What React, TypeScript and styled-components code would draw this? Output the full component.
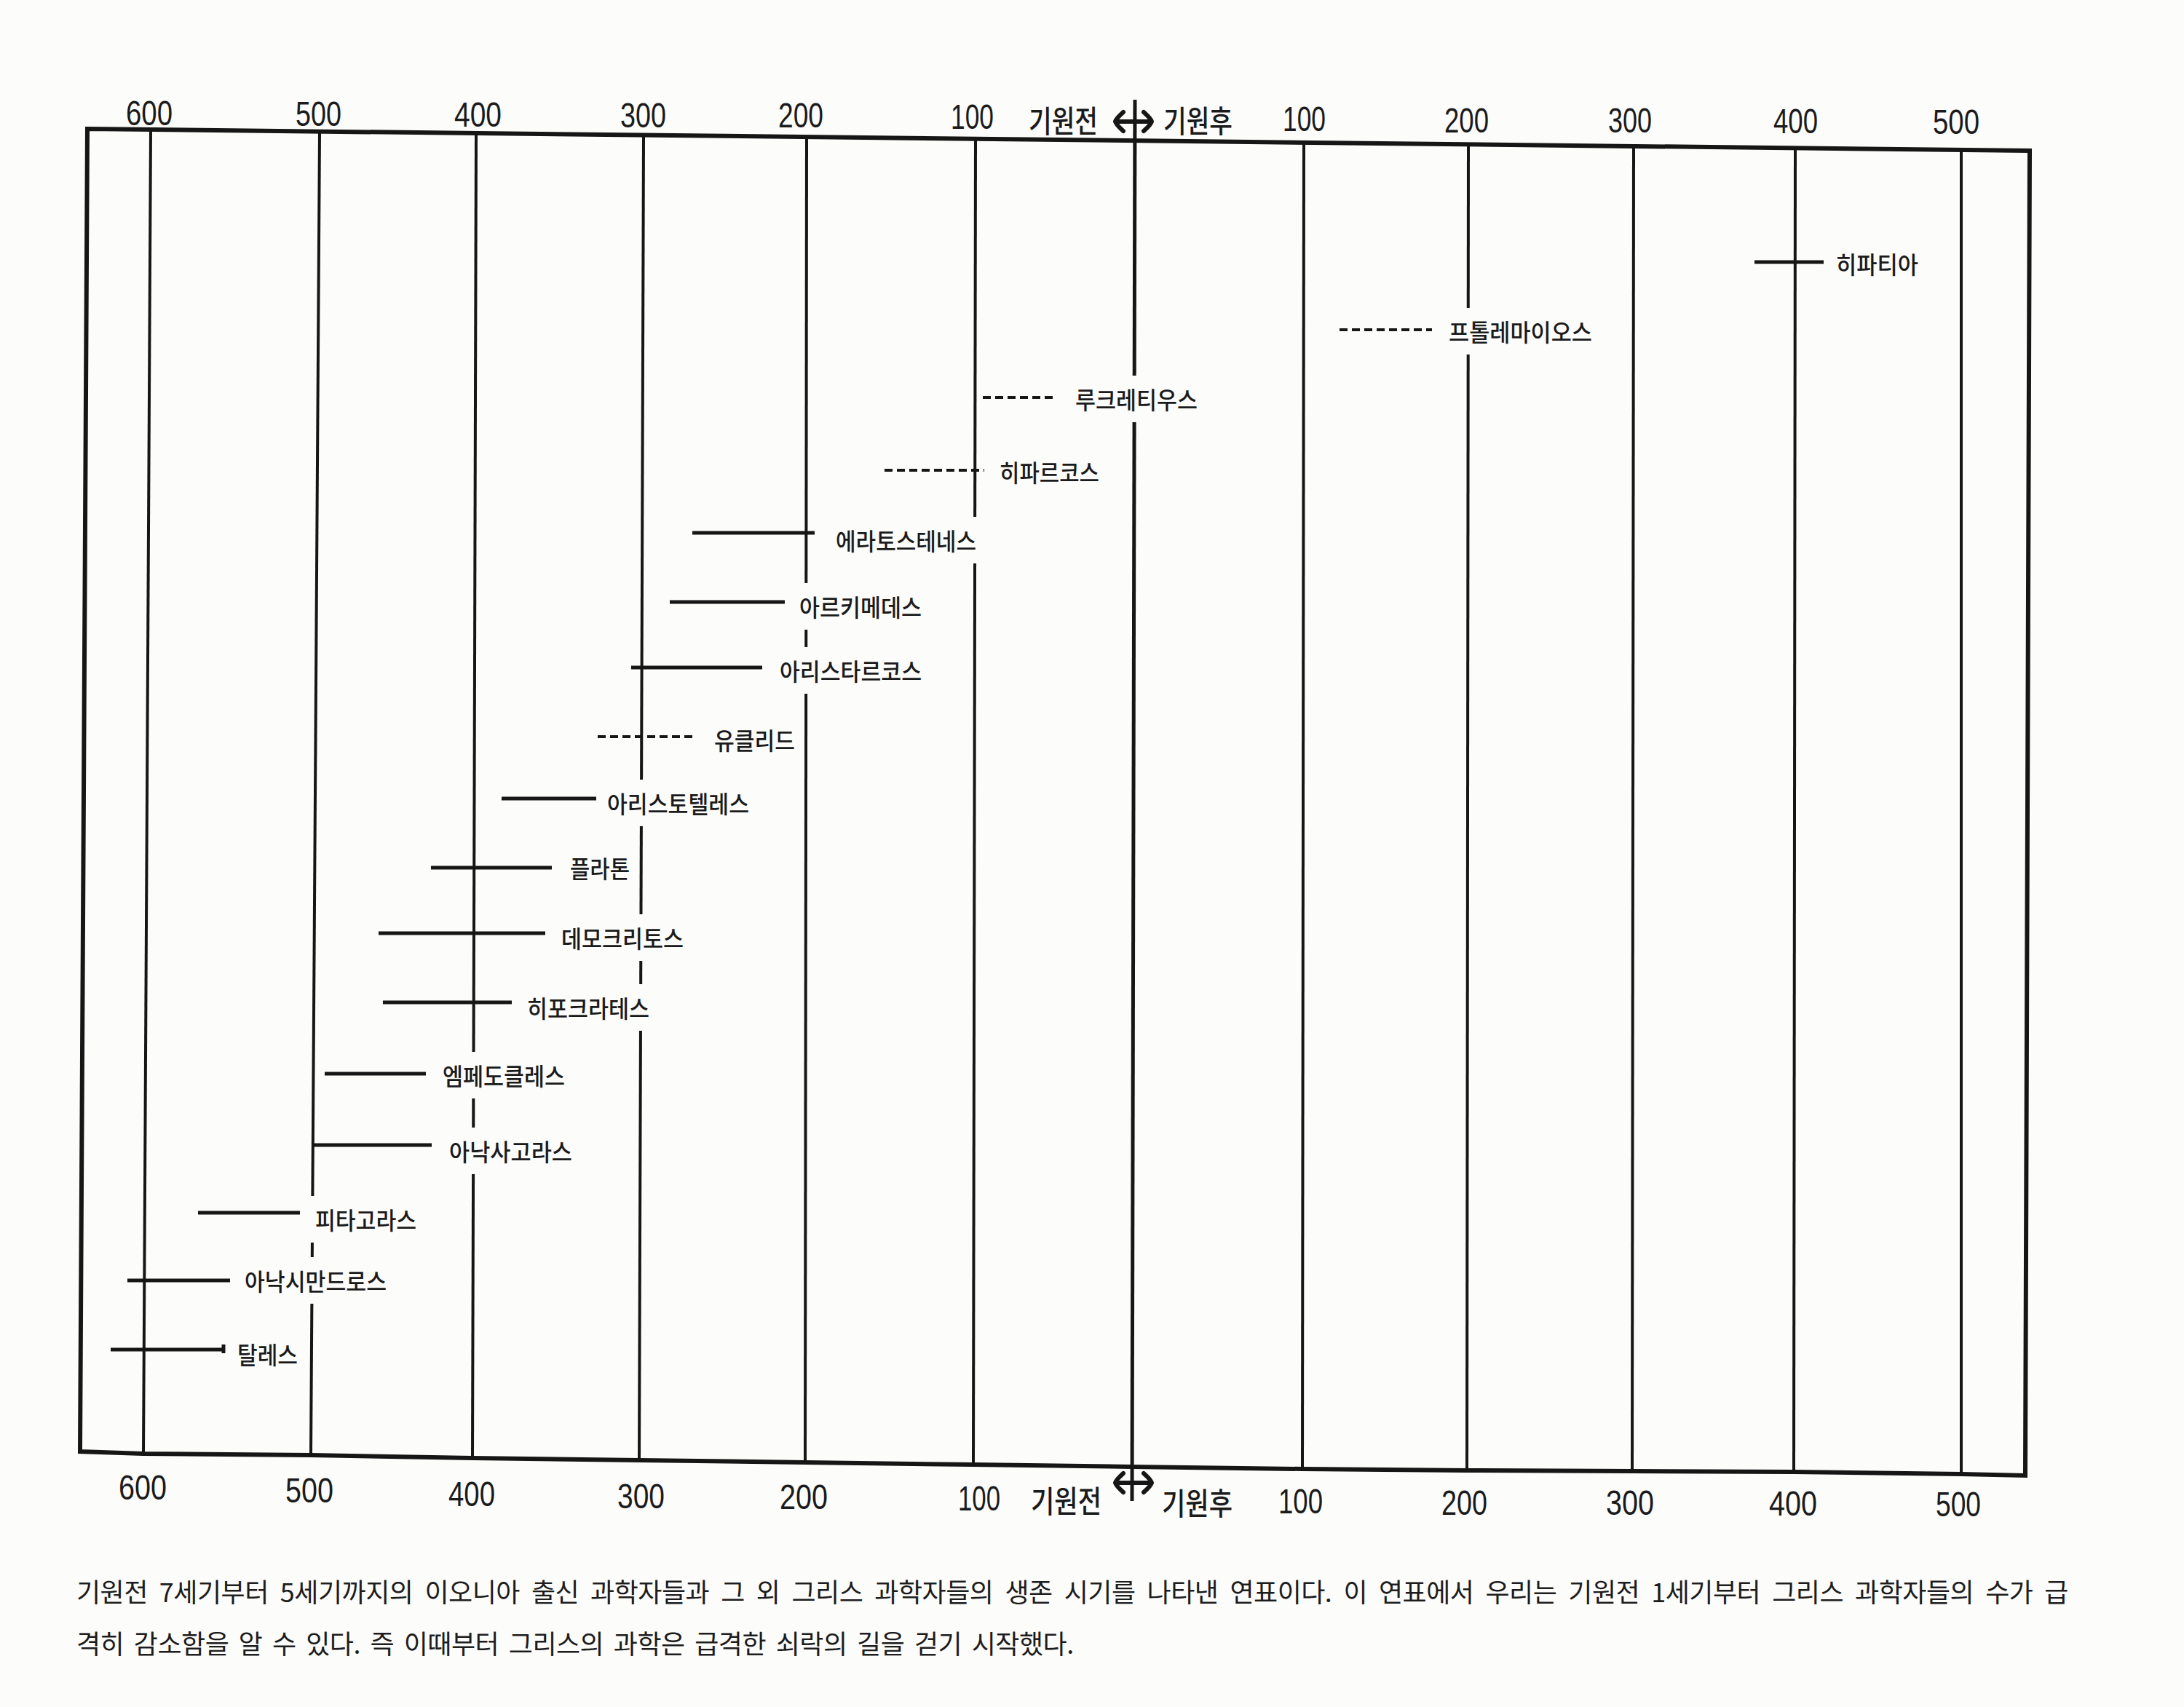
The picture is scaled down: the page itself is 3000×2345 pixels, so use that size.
import styled, { createGlobalStyle } from "styled-components";

const GlobalStyle = createGlobalStyle`
  html, body {
    margin: 0;
    padding: 0;
    background: #fcfcfb;
  }
  body {
    width: 3000px;
    height: 2345px;
    overflow: hidden;
    font-family: "Noto Sans CJK KR", "Noto Sans", sans-serif;
    color: #1b1b1b;
  }
`;

const Page = styled.div`
  width: 3000px;
  height: 2345px;
  display: flex;
  flex-direction: column;
  overflow: hidden;
`;

const Chart = styled.svg`
  display: block;
  width: 3000px;
  height: 2150px;
  flex: none;
`;

const Frame = styled.polygon`
  fill: none;
  stroke: #161616;
  stroke-width: 6;
  stroke-linejoin: miter;
`;

const GridLine = styled.line<{ $bold?: boolean }>`
  stroke: #161616;
  stroke-width: ${(p) => (p.$bold ? 5 : 4)};
`;

const Bar = styled.line<{ $dashed?: boolean }>`
  stroke: #161616;
  stroke-width: ${(p) => (p.$dashed ? 4 : 5)};
  stroke-dasharray: ${(p) => (p.$dashed ? "11 6" : "none")};
`;

const LabelBox = styled.rect`
  fill: #fcfcfb;
`;

const LabelText = styled.text`
  font-family: "Noto Sans CJK KR", "Noto Sans", sans-serif;
  font-size: 33px;
  font-weight: 500;
  fill: #1b1b1b;
`;

const AxisText = styled.text<{ $hangul?: boolean }>`
  font-family: ${(p) =>
    p.$hangul
      ? `"Noto Sans CJK KR", sans-serif`
      : `"Liberation Sans", Arial, sans-serif`};
  font-size: ${(p) => (p.$hangul ? 42 : 48)}px;
  font-weight: ${(p) => (p.$hangul ? 500 : 400)};
  fill: #1b1b1b;
`;

const Arrow = styled.path`
  fill: none;
  stroke: #161616;
  stroke-width: 6;
  stroke-linecap: round;
  stroke-linejoin: round;
`;

const Caption = styled.div`
  padding-left: 105px;
  width: 2736px;
  display: flex;
  flex-direction: column;
`;

const CaptionLine = styled.div<{ $justify?: boolean }>`
  width: 2736px;
  font-size: 36px;
  line-height: 71px;
  height: 71px;
  letter-spacing: -0.5px;
  word-spacing: 6px;
  white-space: nowrap;
  text-align: ${(p) => (p.$justify ? "justify" : "left")};
  text-align-last: ${(p) => (p.$justify ? "justify" : "left")};
  color: #1d1d1d;
`;

type Grid = { tx: number; bx: number; ty: number; by: number };

const grid: Grid[] = [
  { tx: 207, bx: 197, ty: 180, by: 1997 },
  { tx: 439, bx: 427, ty: 183, by: 1999 },
  { tx: 654, bx: 649, ty: 185, by: 2003 },
  { tx: 884, bx: 878, ty: 188, by: 2006 },
  { tx: 1108, bx: 1106, ty: 190, by: 2009 },
  { tx: 1340, bx: 1337, ty: 193, by: 2012 },
  { tx: 1791, bx: 1789, ty: 196, by: 2018 },
  { tx: 2017, bx: 2015, ty: 198, by: 2020 },
  { tx: 2244, bx: 2242, ty: 201, by: 2021 },
  { tx: 2466, bx: 2464, ty: 203, by: 2022 },
  { tx: 2694, bx: 2694, ty: 206, by: 2025 },
];

type Axis = { text: string; x: number; w: number; y: number; hangul?: boolean };

const topAxis: Axis[] = [
  { text: "600", x: 173, w: 64, y: 155 },
  { text: "500", x: 406, w: 63, y: 156 },
  { text: "400", x: 624, w: 65, y: 157 },
  { text: "300", x: 852, w: 63, y: 158 },
  { text: "200", x: 1069, w: 62, y: 158 },
  { text: "100", x: 1306, w: 59, y: 160 },
  { text: "기원전", x: 1413, w: 95, y: 163, hangul: true },
  { text: "기원후", x: 1598, w: 95, y: 163, hangul: true },
  { text: "100", x: 1762, w: 59, y: 163 },
  { text: "200", x: 1984, w: 61, y: 165 },
  { text: "300", x: 2209, w: 60, y: 165 },
  { text: "400", x: 2436, w: 61, y: 166 },
  { text: "500", x: 2655, w: 64, y: 167 },
];

const bottomAxis: Axis[] = [
  { text: "600", x: 163, w: 66, y: 2043 },
  { text: "500", x: 392, w: 66, y: 2047 },
  { text: "400", x: 616, w: 64, y: 2052 },
  { text: "300", x: 848, w: 65, y: 2055 },
  { text: "200", x: 1071, w: 66, y: 2056 },
  { text: "100", x: 1316, w: 58, y: 2058 },
  { text: "기원전", x: 1416, w: 97, y: 2059, hangul: true },
  { text: "기원후", x: 1596, w: 97, y: 2062, hangul: true },
  { text: "100", x: 1756, w: 61, y: 2062 },
  { text: "200", x: 1980, w: 63, y: 2064 },
  { text: "300", x: 2206, w: 66, y: 2064 },
  { text: "400", x: 2430, w: 66, y: 2065 },
  { text: "500", x: 2659, w: 62, y: 2066 },
];

type Scientist = {
  name: string;
  from: number;
  to: number;
  y: number;
  tx: number;
  tw: number;
  ty: number;
  dashed?: boolean;
  tick?: boolean;
};

const scientists: Scientist[] = [
  { name: "히파티아", from: 2410, to: 2505, y: 360, tx: 2522, tw: 113, ty: 362 },
  { name: "프톨레마이오스", from: 1840, to: 1967, y: 453, tx: 1990, tw: 197, ty: 455, dashed: true },
  { name: "루크레티우스", from: 1350, to: 1450, y: 546, tx: 1477, tw: 168, ty: 548, dashed: true },
  { name: "히파르코스", from: 1215, to: 1352, y: 646, tx: 1373, tw: 137, ty: 648, dashed: true },
  { name: "에라토스테네스", from: 951, to: 1119, y: 732, tx: 1148, tw: 193, ty: 742 },
  { name: "아르키메데스", from: 920, to: 1078, y: 827, tx: 1098, tw: 168, ty: 833 },
  { name: "아리스타르코스", from: 867, to: 1047, y: 917, tx: 1071, tw: 195, ty: 921 },
  { name: "유클리드", from: 821, to: 956, y: 1012, tx: 981, tw: 111, ty: 1016, dashed: true },
  { name: "아리스토텔레스", from: 689, to: 819, y: 1097, tx: 834, tw: 195, ty: 1103 },
  { name: "플라톤", from: 592, to: 758, y: 1192, tx: 783, tw: 82, ty: 1192 },
  { name: "데모크리토스", from: 520, to: 749, y: 1282, tx: 771, tw: 168, ty: 1288 },
  { name: "히포크라테스", from: 526, to: 703, y: 1377, tx: 724, tw: 168, ty: 1384 },
  { name: "엠페도클레스", from: 446, to: 585, y: 1475, tx: 608, tw: 168, ty: 1477 },
  { name: "아낙사고라스", from: 430, to: 593, y: 1573, tx: 617, tw: 169, ty: 1581 },
  { name: "피타고라스", from: 272, to: 412, y: 1666, tx: 433, tw: 139, ty: 1675 },
  { name: "아낙시만드로스", from: 175, to: 316, y: 1759, tx: 336, tw: 195, ty: 1759 },
  { name: "탈레스", from: 152, to: 307, y: 1854, tx: 326, tw: 83, ty: 1860, tick: true },
];

const framePoints = [
  "120,177",
  "2788,207",
  "2782,2027",
  "2694,2025",
  "2464,2022",
  "2242,2021",
  "2015,2020",
  "1789,2018",
  "1555,2015",
  "1337,2012",
  "1106,2009",
  "878,2006",
  "649,2003",
  "427,1999",
  "197,1997",
  "110,1994",
].join(" ");

// 기원전 / 기원후 arrow around the zero line
const arrowPath = (cx: number, cy: number) =>
  `M${cx - 14},${cy - 13} Q${cx - 24},${cy - 4} ${cx - 25},${cy} Q${cx - 24},${cy + 4} ${cx - 14},${cy + 13}` +
  ` M${cx - 24},${cy} L${cx + 24},${cy}` +
  ` M${cx + 14},${cy - 13} Q${cx + 24},${cy - 4} ${cx + 25},${cy} Q${cx + 24},${cy + 4} ${cx + 14},${cy + 13}`;

function App() {
  return (
    <>
      <GlobalStyle />
      <Page>
        <Chart viewBox="0 0 3000 2150" xmlns="http://www.w3.org/2000/svg">
          {grid.map((g) => (
            <GridLine key={g.tx} x1={g.tx} y1={g.ty} x2={g.bx} y2={g.by} />
          ))}
          <GridLine $bold x1={1559} y1={137} x2={1555} y2={2062} />
          <Frame points={framePoints} />

          <Arrow d={arrowPath(1557, 167)} />
          <Arrow d={arrowPath(1557, 2037)} />

          {scientists.map((s) => (
            <g key={s.name}>
              <Bar $dashed={s.dashed} x1={s.from} y1={s.y} x2={s.to} y2={s.y} />
              {s.tick && <Bar x1={s.to} y1={s.y - 7} x2={s.to} y2={s.y + 5} />}
              <LabelBox x={s.tx - 10} y={s.ty - 32} width={s.tw + 20} height={64} />
              <LabelText
                x={s.tx}
                y={s.ty}
                dominantBaseline="central"
                textLength={s.tw}
                lengthAdjust="spacingAndGlyphs"
              >
                {s.name}
              </LabelText>
            </g>
          ))}

          {[...topAxis, ...bottomAxis].map((a, i) => (
            <AxisText
              key={i}
              $hangul={a.hangul}
              x={a.x}
              y={a.y}
              dominantBaseline="central"
              textLength={a.w}
              lengthAdjust="spacingAndGlyphs"
            >
              {a.text}
            </AxisText>
          ))}
        </Chart>

        <Caption>
          <CaptionLine $justify>
            기원전 7세기부터 5세기까지의 이오니아 출신 과학자들과 그 외 그리스 과학자들의 생존 시기를 나타낸 연표이다. 이 연표에서 우리는 기원전 1세기부터 그리스 과학자들의 수가 급
          </CaptionLine>
          <CaptionLine>
            격히 감소함을 알 수 있다. 즉 이때부터 그리스의 과학은 급격한 쇠락의 길을 걷기 시작했다.
          </CaptionLine>
        </Caption>
      </Page>
    </>
  );
}

export default App;
